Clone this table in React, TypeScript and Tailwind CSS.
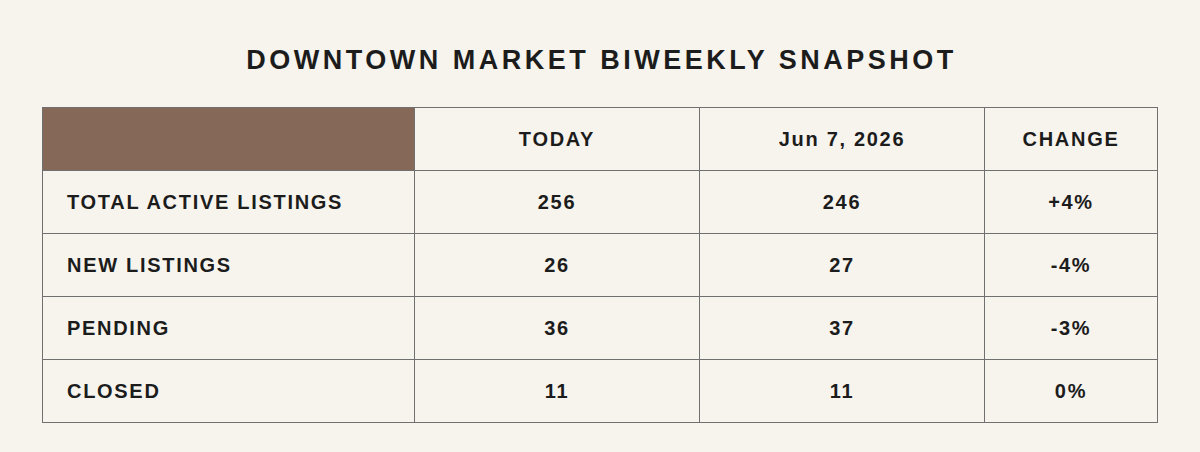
import { Fragment } from 'react'

const rows = [
  { label: 'TOTAL ACTIVE LISTINGS', today: '256', prev: '246', change: '+4%' },
  { label: 'NEW LISTINGS', today: '26', prev: '27', change: '-4%' },
  { label: 'PENDING', today: '36', prev: '37', change: '-3%' },
  { label: 'CLOSED', today: '11', prev: '11', change: '0%' },
]

const cell = 'flex items-center bg-[#f7f4ee]'

export default function App() {
  return (
    <div
      className="min-h-[452px] w-[1200px] bg-[#f7f4ee] pt-[44px] text-[#1c1c1c]"
      style={{ fontFamily: '"Liberation Sans", Arial, sans-serif' }}
    >
      <h1 className="pl-[3px] text-center text-[27px] font-bold leading-8 tracking-[3.5px]">
        DOWNTOWN MARKET BIWEEKLY SNAPSHOT
      </h1>

      <div className="mx-[42px] mt-[31px] grid grid-cols-[371px_284px_284px_172px] auto-rows-[62px] gap-px bg-[#707070] p-px text-[20px] font-bold tracking-[1.7px]">
        <div className="bg-[#856857]" />
        <div className={`${cell} justify-center`}>TODAY</div>
        <div className={`${cell} justify-center`}>Jun 7, 2026</div>
        <div className={`${cell} justify-center`}>CHANGE</div>

        {rows.map(r => (
          <Fragment key={r.label}>
            <div className={`${cell} pl-6`}>{r.label}</div>
            <div className={`${cell} justify-center`}>{r.today}</div>
            <div className={`${cell} justify-center`}>{r.prev}</div>
            <div className={`${cell} justify-center`}>{r.change}</div>
          </Fragment>
        ))}
      </div>
    </div>
  )
}
